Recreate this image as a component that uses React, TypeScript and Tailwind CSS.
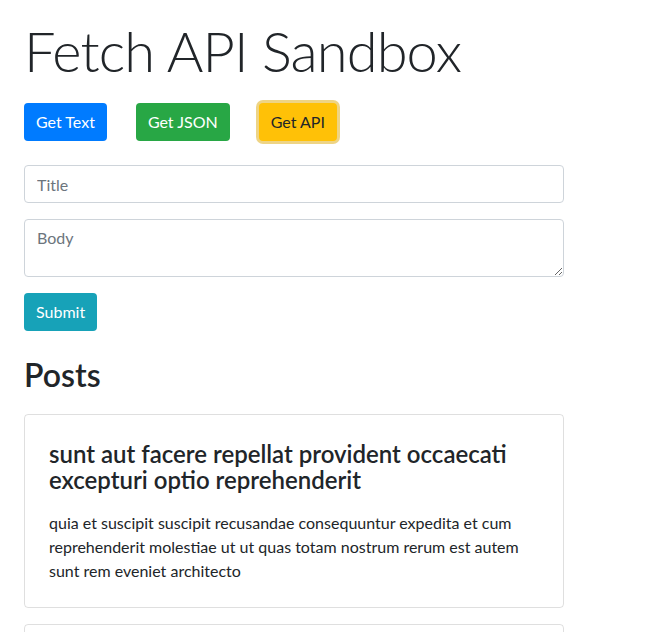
import { useState } from "react";

type Post = {
  id: number;
  title: string;
  body: string;
};

const posts: Post[] = [
  {
    id: 1,
    title: "sunt aut facere repellat provident occaecati excepturi optio reprehenderit",
    body: "quia et suscipit suscipit recusandae consequuntur expedita et cum reprehenderit molestiae ut ut quas totam nostrum rerum est autem sunt rem eveniet architecto",
  },
  {
    id: 2,
    title: "qui est esse",
    body: "est rerum tempore vitae sequi sint nihil reprehenderit dolor beatae ea dolores neque fugiat blanditiis voluptate porro vel nihil molestiae ut reiciendis qui aperiam non debitis possimus qui neque nisi nulla",
  },
];

export default function App() {
  const [title, setTitle] = useState("");
  const [body, setBody] = useState("");

  return (
    <div className="min-h-screen bg-white px-6 pt-[17px] text-[#212529] font-['Lato',sans-serif]">
      <div className="w-[540px]">
        <h1 className="text-[56px] font-light leading-[1.2] tracking-[-0.016em] mb-[19px]">Fetch API Sandbox</h1>

        {/* Buttons */}
        <div className="flex gap-[29px] mb-6">
          <button className="h-[38px] px-3 rounded bg-[#007bff] text-white text-base">Get Text</button>
          <button className="h-[38px] px-3 rounded bg-[#28a745] text-white text-base">Get JSON</button>
          <button className="h-[38px] px-3 rounded bg-[#ffc107] text-[#212529] text-base shadow-[0_0_0_3px_rgba(222,170,12,0.5)]">
            Get API
          </button>
        </div>

        {/* Form */}
        <form className="flex flex-col" onSubmit={(e) => e.preventDefault()}>
          <input
            type="text"
            placeholder="Title"
            value={title}
            onChange={(e) => setTitle(e.target.value)}
            className="h-[38px] w-full border border-[#ced4da] rounded px-3 text-base placeholder:text-[#6c757d] outline-none mb-4"
          />
          <textarea
            placeholder="Body"
            value={body}
            onChange={(e) => setBody(e.target.value)}
            className="h-[58px] w-full border border-[#ced4da] rounded px-3 py-1.5 text-base placeholder:text-[#6c757d] outline-none mb-4 resize-y block"
          />
          <div>
            <button type="submit" className="h-[38px] px-3 rounded bg-[#17a2b8] text-white text-base">
              Submit
            </button>
          </div>
        </form>

        <h2 className="text-[32px] font-semibold leading-[1.2] mt-[25px] mb-[19px]">Posts</h2>

        {posts.map((p) => (
          <div key={p.id} className="border border-[rgba(0,0,0,0.125)] rounded px-6 pt-[26px] pb-6 mb-4">
            <h4 className="text-2xl font-semibold leading-[26px] mb-[18px]">{p.title}</h4>
            <p className="text-base leading-6">{p.body}</p>
          </div>
        ))}
      </div>
    </div>
  );
}
